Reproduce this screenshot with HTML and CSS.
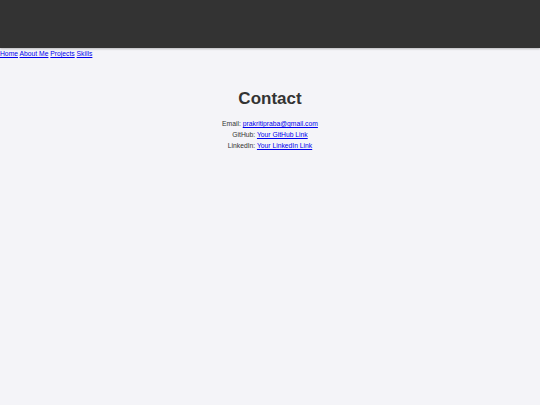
FILE: index.html
```html
<!DOCTYPE html>
<html lang="en">
<head>
<meta charset="utf-8">
<title>Contact</title>
<link rel="stylesheet" href="styles.css">
</head>
<body>
<header class="site-header"></header>
<nav class="site-nav">
  <a href="#">Home</a>
  <a href="#">About Me</a>
  <a href="#">Projects</a>
  <a href="#">Skills</a>
</nav>
<section class="contact">
  <h2 class="contact-title">Contact</h2>
  <p class="contact-line">Email: <a href="#">prakritipraba@gmail.com</a></p>
  <p class="contact-line">GitHub: <a href="#">Your GitHub Link</a></p>
  <p class="contact-line">LinkedIn: <a href="#">Your LinkedIn Link</a></p>
</section>
</body>
</html>
```

FILE: styles.css
```css
html, body {
  margin: 0;
  padding: 0;
}
body {
  background: #f4f4f8;
  color: #333;
  font-family: "Liberation Sans", Arial, sans-serif;
  font-size: 6.75px;
  min-height: 405px;
}
a {
  color: #0000ee;
}
.site-header {
  height: 48px;
  background: #333;
  box-shadow: 0 1px 2px rgba(0, 0, 0, 0.25);
}
.site-nav {
  line-height: 8px;
  padding-top: 2px;
}
.contact {
  text-align: center;
  padding-top: 31px;
}
.contact-title {
  margin: 0 0 11px;
  font-size: 17px;
  line-height: 20px;
  font-weight: bold;
}
.contact-line {
  margin: 0 0 3px;
  line-height: 8px;
}
```
